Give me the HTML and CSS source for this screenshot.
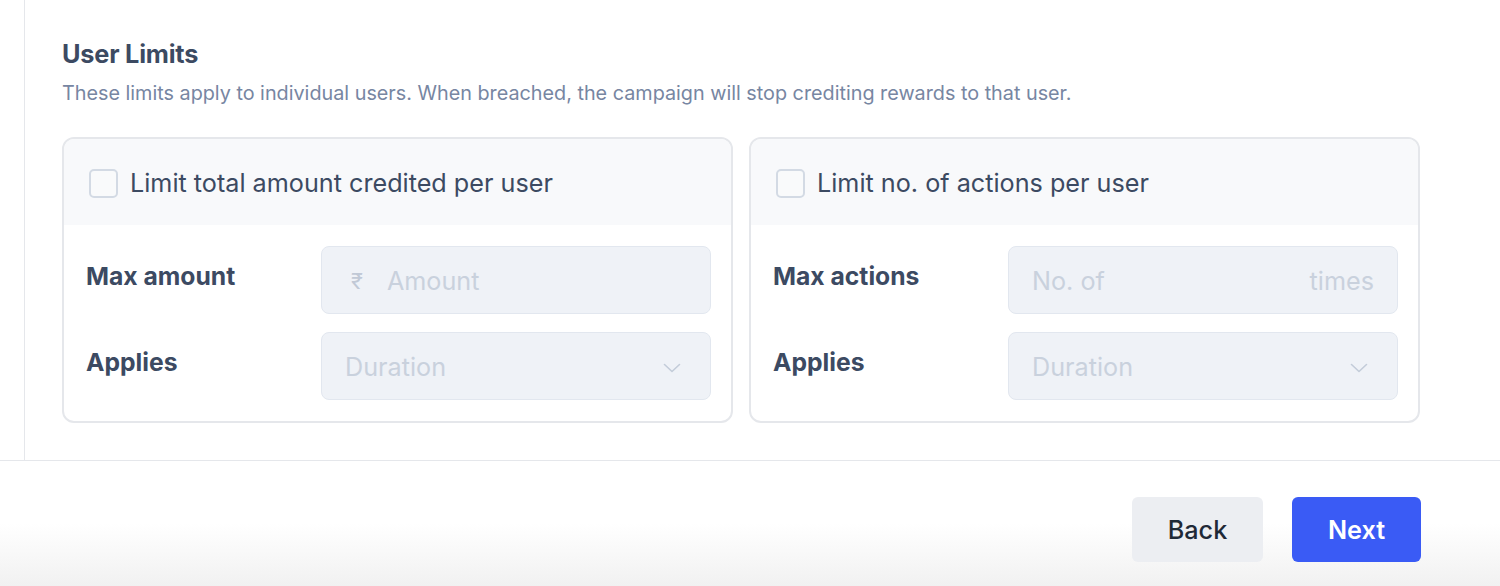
FILE: index.html
```html
<!DOCTYPE html>
<html lang="en">
<head>
<meta charset="utf-8">
<title>User Limits</title>
<link rel="stylesheet" href="styles.css">
</head>
<body>
<div class="page">
  <div class="content">
    <div class="rail"></div>
    <main class="main">
      <h2 class="title">User Limits</h2>
      <p class="subtitle">These limits apply to individual users. When breached, the campaign will stop crediting rewards to that user.</p>
      <div class="cards">
        <section class="card">
          <label class="card-head">
            <span class="checkbox"></span>
            <span class="head-text">Limit total amount credited per user</span>
          </label>
          <div class="card-body">
            <div class="label">Max amount</div>
            <div class="field">
              <span class="prefix">₹</span>
              <span class="placeholder">Amount</span>
            </div>
            <div class="label">Applies</div>
            <div class="field select">
              <span class="placeholder">Duration</span>
              <svg class="chev" width="18" height="10" viewBox="0 0 18 10"><path d="M1.5 1.5 L9 8.5 L16.5 1.5" fill="none" stroke="#c3ccd9" stroke-width="1.6" stroke-linecap="round" stroke-linejoin="round"/></svg>
            </div>
          </div>
        </section>
        <section class="card">
          <label class="card-head">
            <span class="checkbox"></span>
            <span class="head-text">Limit no. of actions per user</span>
          </label>
          <div class="card-body">
            <div class="label">Max actions</div>
            <div class="field split">
              <span class="placeholder">No. of</span>
              <span class="placeholder">times</span>
            </div>
            <div class="label">Applies</div>
            <div class="field select">
              <span class="placeholder">Duration</span>
              <svg class="chev" width="18" height="10" viewBox="0 0 18 10"><path d="M1.5 1.5 L9 8.5 L16.5 1.5" fill="none" stroke="#c3ccd9" stroke-width="1.6" stroke-linecap="round" stroke-linejoin="round"/></svg>
            </div>
          </div>
        </section>
      </div>
    </main>
  </div>
  <footer class="footer">
    <button class="btn btn-back">Back</button>
    <button class="btn btn-next">Next</button>
  </footer>
</div>
</body>
</html>
```

FILE: styles.css
```css
* { box-sizing: border-box; }
html, body {
  margin: 0;
  padding: 0;
  background: #ffffff;
  font-family: Inter, "Noto Sans", "Liberation Sans", sans-serif;
}
.page {
  width: 1500px;
  height: 586px;
  display: flex;
  flex-direction: column;
  overflow: hidden;
}
.content {
  height: 461px;
  display: flex;
  border-bottom: 1px solid #e5e7eb;
}
.rail {
  width: 25px;
  border-right: 1px solid #e5e7eb;
}
.main {
  padding: 38px 0 0 37px;
}
.title {
  margin: 0;
  font-size: 25.3px;
  line-height: 32px;
  font-weight: 700;
  color: #3c4a62;
  letter-spacing: -0.2px;
}
.subtitle {
  margin: 11px 0 0;
  font-size: 19.8px;
  line-height: 24px;
  color: #7786a2;
}
.cards {
  margin-top: 32px;
  width: 1358px;
  display: grid;
  grid-template-columns: 1fr 1fr;
  gap: 16px;
}
.card {
  border: 2px solid #e5e7eb;
  border-radius: 12px;
  overflow: hidden;
}
.card-head {
  height: 86px;
  background: #f8f9fb;
  display: flex;
  align-items: center;
  padding: 2px 0 0 25px;
  gap: 12px;
}
.checkbox {
  width: 29px;
  height: 29px;
  border: 2px solid #d3dae4;
  border-radius: 5px;
  background: #f9fafb;
}
.head-text {
  font-size: 25.2px;
  color: #3c4a62;
  line-height: 30px;
}
.card-body {
  display: grid;
  grid-template-columns: 235px 1fr;
  row-gap: 18px;
  padding: 21px 20px 21px 22px;
  align-items: center;
}
.label {
  font-size: 24.7px;
  font-weight: 700;
  color: #3c4a62;
  margin-top: -8px;
}
.field {
  height: 68px;
  background: #eff2f7;
  border: 1.5px solid #e2e7ef;
  border-radius: 8px;
  display: flex;
  align-items: center;
  padding: 2px 23px 0 23px;
  font-size: 25.2px;
}
.placeholder {
  color: #c9d1dd;
}
.prefix {
  color: #c1c9d6;
  font-size: 22px;
  margin: 0 24px 0 6px;
}
.split {
  justify-content: space-between;
}
.select {
  justify-content: space-between;
  padding-right: 29px;
}
.chev {
  margin-top: 2px;
}
.footer {
  flex: 1;
  display: flex;
  justify-content: flex-end;
  align-items: flex-start;
  gap: 29px;
  padding: 36px 79px 0 0;
  background: linear-gradient(to bottom, #ffffff 0%, #ffffff 50%, #f1f1f1 100%);
}
.btn {
  height: 65px;
  border: 0;
  border-radius: 6px;
  font-family: Inter, "Noto Sans", "Liberation Sans", sans-serif;
  font-size: 25.2px;
  padding: 0;
}
.btn-back {
  width: 131px;
  background: #eceef2;
  color: #1f2937;
  font-weight: 500;
}
.btn-next {
  width: 129px;
  background: #3a5bf5;
  color: #ffffff;
  font-weight: 600;
}
```
